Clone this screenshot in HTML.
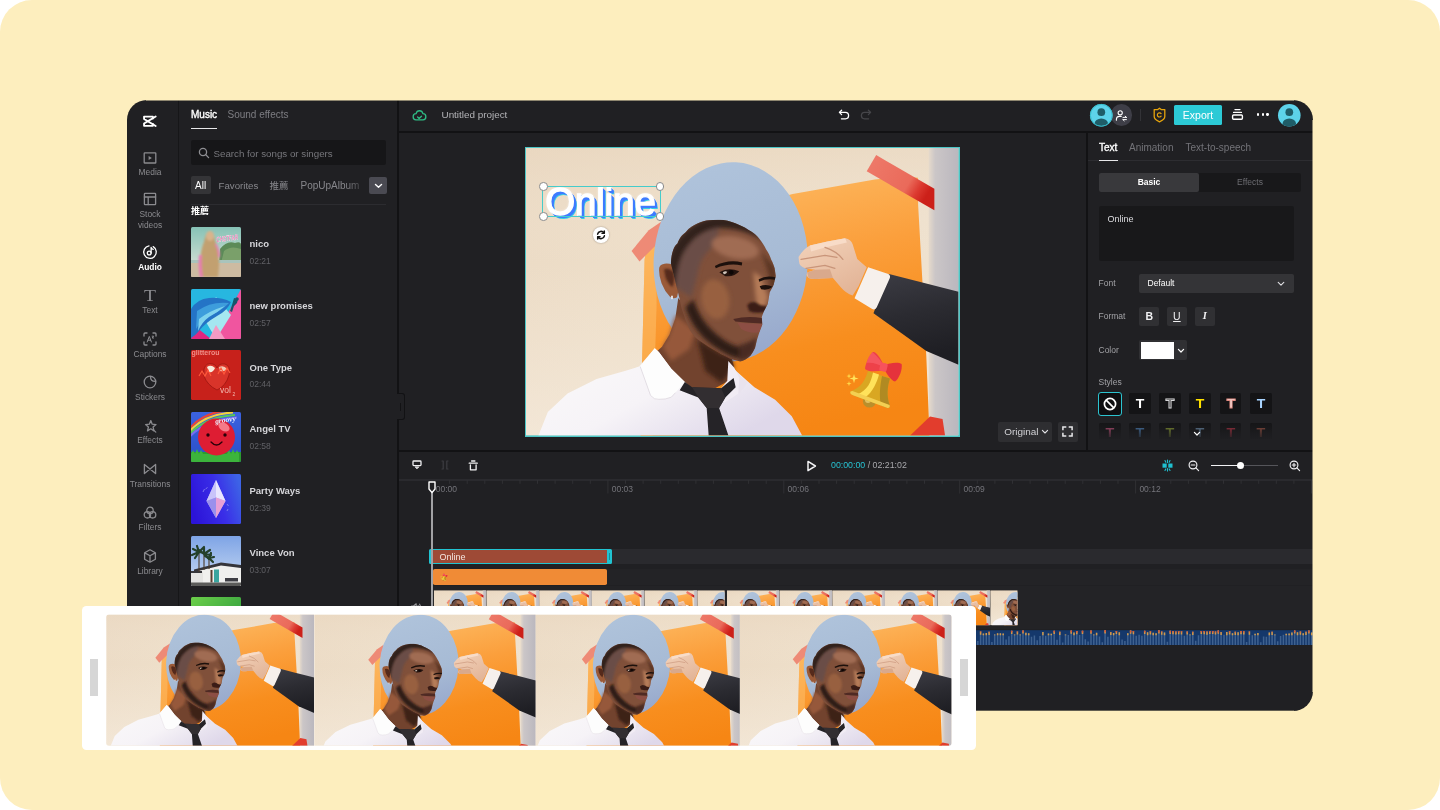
<!DOCTYPE html>
<html lang="en"><head><meta charset="utf-8"><title>Online video editor</title>
<style>

*{box-sizing:border-box;margin:0;padding:0}
html,body{width:1440px;height:810px;overflow:hidden;background:#fff}
body{font-family:"Liberation Sans","Noto Sans CJK TC",sans-serif;font-size:10px;color:#c8c8cc}
#stage{position:absolute;left:0;top:0;width:1440px;height:810px;background:#FDEEBE;border-radius:32px;overflow:hidden}
#win{will-change:transform;position:absolute;left:0;top:0;width:1440px;height:810px;clip-path:inset(100px 127px 99px 127px round 20px)}
#win>.bg{position:absolute;left:127px;top:100px;width:1186px;height:611px;background:#202023}
.a{position:absolute}
.t{position:absolute;white-space:nowrap;line-height:1}
.c{transform:translateX(-50%)}
svg{display:block;overflow:visible}
svg svg{overflow:hidden}
.ln{position:absolute;background:#121214}

</style></head>
<body>
<svg width="0" height="0" style="position:absolute"><defs>
<linearGradient id="pwall" x1="0" y1="0" x2="1" y2="0.5"><stop offset="0" stop-color="#ebdac4"/><stop offset="0.45" stop-color="#eedfca"/><stop offset="1" stop-color="#efe2d0"/></linearGradient>
<linearGradient id="pwall2" x1="0" y1="0" x2="0" y2="1"><stop offset="0" stop-color="#e8d5bd" stop-opacity="0.5"/><stop offset="0.4" stop-color="#f4e8d8" stop-opacity="0"/><stop offset="1" stop-color="#f6ecdf" stop-opacity="0.6"/></linearGradient>
<linearGradient id="pgray" x1="0" y1="0" x2="1" y2="0"><stop offset="0" stop-color="#e6dacb"/><stop offset="0.22" stop-color="#cbc6c7"/><stop offset="1" stop-color="#bab7be"/></linearGradient>
<linearGradient id="porange" x1="0.2" y1="0" x2="0.45" y2="1"><stop offset="0" stop-color="#fdbb64"/><stop offset="0.38" stop-color="#fb9f3c"/><stop offset="0.7" stop-color="#f88e1e"/><stop offset="1" stop-color="#f68614"/></linearGradient>
<linearGradient id="poval" x1="0.3" y1="0" x2="0.6" y2="1"><stop offset="0" stop-color="#afc3db"/><stop offset="0.6" stop-color="#a7bbd5"/><stop offset="1" stop-color="#97a8cc"/></linearGradient>
<linearGradient id="pshirt" x1="0" y1="0" x2="1" y2="0.6"><stop offset="0" stop-color="#fbfafa"/><stop offset="0.55" stop-color="#f6f3f7"/><stop offset="1" stop-color="#dfd8ea"/></linearGradient>
<linearGradient id="psleeve" x1="0" y1="0" x2="0.2" y2="1"><stop offset="0" stop-color="#3c3c44"/><stop offset="0.5" stop-color="#2b2b31"/><stop offset="1" stop-color="#1e1e23"/></linearGradient>
<linearGradient id="phand" x1="0" y1="0" x2="0.6" y2="1"><stop offset="0" stop-color="#f3d3bb"/><stop offset="1" stop-color="#e3b598"/></linearGradient>
<linearGradient id="ptape" x1="0" y1="0" x2="1" y2="0.5"><stop offset="0" stop-color="#ee7b6b"/><stop offset="0.7" stop-color="#ea6a5a"/><stop offset="0.86" stop-color="#dc3a30"/><stop offset="1" stop-color="#cc2019"/></linearGradient>
<filter id="pb2" x="-20%" y="-20%" width="140%" height="140%"><feGaussianBlur stdDeviation="2.2"/></filter>
<filter id="pb1" x="-20%" y="-20%" width="140%" height="140%"><feGaussianBlur stdDeviation="1"/></filter>
<clipPath id="phead"><path d="M145.4 116 C146 104 149 98 152 96 C154 90 157 87 160.2 84.6 C164 80 168 78 172 76 C176 74 180 73 183.9 72.7 C189 72 194 72 198 72.5 C204 73.5 209 75 213.5 77.2 C218 79 222 81.5 226 84 C229 86 232 88.5 234.3 91.5 C237 95 239 98 241 102 C243 105 245 108.5 246.1 112.3 C247.5 115 248.8 118 249.5 121 L250.6 128.6 L248.5 137.4 L244.6 144.9 L242.6 156.7 L238.7 164.1 L236.6 170 L237.2 177.4 L234.3 184.9 L231.9 192.3 L229.8 201.1 C228.5 204 227 206.5 225.4 208.6 C222 212 218.5 214 215 214.5 C211.5 214 208 213 204.6 211.5 L195.7 207.1 L183.9 200.3 L172 192.3 C169 189.5 166.5 186.5 164.6 183.4 C162 178.5 160 173.5 158.7 168.6 C156.5 163 155 157.5 154.3 152.3 Z"/></clipPath>
<symbol id="photo" viewBox="0 0 434 289" preserveAspectRatio="none">
<rect width="434" height="289" fill="url(#pwall)"/>
<rect width="434" height="289" fill="url(#pwall2)"/>
<rect x="404" width="30" height="289" fill="url(#pgray)"/>
<path d="M119 112 L124 84 L267.6 46.3 L350 31.7 L380 29 L393.3 30 L393.5 57.3 L397.6 130.6 L401.7 209.4 L405 291 L115 291 L116.5 215 Z" fill="url(#porange)"/>
<path d="M119 112 L122 96 L131 96 L131 160 L127 291 L115 291 L116.5 215 Z" fill="#fdbf6a" opacity="0.55"/>
<path d="M351.4 7.1 L409.8 41 L409.8 62.7 L341.9 23.4 Z" fill="url(#ptape)"/>
<path d="M105.9 103.6 L123.1 82.6 L136 74 L138 88 L129.3 98.7 L113.9 114.1 Z" fill="#ee8a76"/>
<path d="M385.5 289 L405.4 269.8 L418 272.5 L420.5 289 Z" fill="#e23d2d"/>
<ellipse cx="205.4" cy="114.4" rx="77.3" ry="100.2" fill="url(#poval)" transform="rotate(3 205.4 114.4)"/>
<!-- sleeve / cuff / hand -->
<path d="M363.6 126.6 L390.8 133.4 L434 144.5 L434 218 L401.7 204 L348.7 166 Z" fill="url(#psleeve)"/>
<path d="M343.3 119.8 L363.6 126.6 Q366 128 365 131 L352 160 Q350 163.5 347 161.5 L329.7 151 Z" fill="#f6f0ec"/>
<path d="M273.5 109.5 Q278 102 284.9 98.1 L302.5 94 L320.2 90.7 Q326 91.5 327.8 96.7 L332.4 111.6 L341.9 119.8 L333.8 138.8 L327.8 148.3 Q321 146 316.1 140.2 L308 130.6 L295.7 131.2 Q288 132.5 283.5 130.6 Q280.5 128 282.2 125.2 L290.3 122.5 L280.8 121.1 Q274 119 274 114.4 Z" fill="url(#phand)"/>
<path d="M284.9 98.1 L302.5 94 L320.2 90.7 L322 95 L300 100 L286 104 Z" fill="#f8dcc8"/>
<path d="M282.2 125.2 L290.3 122.5 L305 122 L308 130.6 L295.7 131.2 Q288 132.5 283.5 130.6 Z" fill="#d9a98c"/>
<path d="M276 112 L300 108 L312 110 M281 121 L300 118 L310 121 M300 100 Q312 104 318 112" stroke="#c9957a" stroke-width="1.3" fill="none" stroke-linecap="round"/>
<!-- neck -->
<path d="M152.8 150.8 L149.8 171.5 L143.9 187.8 L136.5 199.7 L130 205.6 L140 222 L158.7 239.7 L185 244 L209.1 231 L208.5 219 L206 210 L195.7 207.1 Z" fill="#72432e"/>
<path d="M150 168 L144 188 L137 200 L146 214 L164 202 L170 184 Z" fill="#96593a" filter="url(#pb2)"/>
<path d="M172 192.3 L195.7 207.1 L206 210 L208.5 222 L196 236 L180 224 Z" fill="#3c2118" filter="url(#pb2)"/>
<!-- ear -->
<path d="M133.5 123 Q133 117 139 116.3 Q147 115.5 151.5 121 L154 138.9 L151.5 150 Q148 152.5 144.5 149.5 Q139 144 136 136 Q133.5 129 133.5 123 Z" fill="#9a5a38"/>
<path d="M138.5 122 Q144 120 148 125 Q150 132 147 140 Q142 136 140 130 Z" fill="#55291a" filter="url(#pb1)"/>
<rect x="145.6" y="148.5" width="1.8" height="3.4" fill="#e9e9ee"/>
<!-- head -->
<g clip-path="url(#phead)">
<rect x="130" y="60" width="130" height="165" fill="#80503a"/>
<g filter="url(#pb2)">
<path d="M140 122 C146 96 156 80 184 70 C205 66 226 76 240 94 C226 85 210 80 194 80.5 C178 82 166 92 158 106 C153 116 151 128 150 140 L146 144 Z" fill="#33221f"/>
<path d="M150 140 C151 128 153 116 158 106 C166 92 178 82 194 80.5 L190 98 C180 104 174 114 172 128 L166 150 Z" fill="#6a4e46"/>
<ellipse cx="210" cy="100" rx="24" ry="11" fill="#a06c52" transform="rotate(12 210 100)"/>
<ellipse cx="190" cy="152" rx="14" ry="20" fill="#98603f" transform="rotate(-10 190 152)"/>
<path d="M228 124 L236 130 L243 150 L240 160 L232 160 L230 146 Z" fill="#b57b58"/>
<path d="M160 160 C166 178 176 192 196 204 C206 210 214 213 222 210 L230 198 C216 204 204 198 192 188 C180 178 172 166 168 152 Z" fill="#2f1a13"/>
<path d="M214 198 Q224 196 232 190 L230 204 Q224 214 214 214 Z" fill="#4a2a20"/>
<path d="M236 104 L250 120 L252 140 L246 146 L244 128 Z" fill="#5a3424"/>
</g>
<path d="M189.5 118.5 Q203 111.5 217 115 L216.5 118 Q203 115.5 190.5 120.8 Z" fill="#1c100c"/>
<path d="M194 125 Q203 119.5 214 124 Q209 130 200 128.8 Z" fill="#24130e"/>
<path d="M197.5 125 Q200 123.3 202 124.5 Q201 127 198.5 126.8 Z" fill="#cfc4ba"/>
<circle cx="206" cy="125" r="2.3" fill="#0e0706"/>
<path d="M233.5 132 Q241 127.5 250.6 130 L250 132.5 Q241 131 234 134.5 Z" fill="#1c100c"/>
<path d="M234.5 139 Q241 136 247.6 139.5 Q243 143.5 236 142 Z" fill="#1f110d"/>
<path d="M222 158 Q226 153 232 156 Q236 160 241 158.5 Q243 161 240.5 164.5 Q232 167 224 164 Z" fill="#3a1e15" filter="url(#pb1)"/>
<path d="M208 172 Q222 168.5 236.6 171 L237 176.5 Q224 176 210 174.5 Z" fill="#4f2a24"/>
<path d="M212 175.5 Q224 177 237 177 L234.3 184.9 Q226 187.5 216 182 Z" fill="#8c4e44"/>
</g>
<!-- shirt -->
<path d="M12.5 289 L21.9 265.5 L41.7 246.8 L70.8 232.2 L100 223.8 L113.5 219.7 L129.2 201.3 L133.3 205.1 L145.8 221.8 L159.4 235.3 L172 247 L196 247 L208.3 231.1 L208.3 221.8 L229.2 240.5 L250 253 L266.7 269.7 L277.1 289 Z" fill="url(#pshirt)"/>
<path d="M129.2 201.3 L114.6 219.7 L125 248.8 Q129 253.5 133.3 252.6 Q140 253 145.8 250.5 L159.4 235.3 L145.8 221.8 L133.3 205.1 Z" fill="#fdfdfd"/>
<path d="M114.6 219.7 L125 248.8 Q129 253.5 133.3 252.6 Q140 253 145.8 250.5 L150 246" stroke="#ddd6de" stroke-width="0.8" fill="none"/>
<path d="M208.3 221.8 L211 240 L203 252 L215 246 L222 236 Z" fill="#e9e3ee"/>
<path d="M203 214 L209 221 L214 231 L213 247 L199 256 L192 246 L202 234 Z" fill="#f1ecf4"/>
<!-- tie -->
<path d="M159.4 235.3 L166.7 240.5 L195.8 241.5 L208.3 231.1 L210.4 240.5 L200 250.9 L193.8 261.3 L203.1 289 L183.3 289 L181.3 261.3 L172.9 250.9 L154.2 243.6 Z" fill="#252327"/>
<path d="M166.7 240.5 L195.8 241.5 L200 250.9 L193.8 261.3 L181.3 261.3 L172.9 250.9 Z" fill="#322e31"/>
</symbol>
</defs></svg>
<div id="stage">
<div id="win">
<div class="bg"></div>
<div class="ln" style="left:178px;top:100px;width:1px;height:611px;background:#161618"></div>
<div class="ln" style="left:397px;top:100px;width:2px;height:611px"></div>
<div class="ln" style="left:398px;top:131px;width:915px;height:2px"></div>
<div class="ln" style="left:398px;top:450px;width:915px;height:2px"></div>
<div class="ln" style="left:1086px;top:132px;width:2px;height:319px"></div>
<svg class="a" style="left:142.3px;top:115.2px" width="15" height="12.4" viewBox="0 0 16 14" preserveAspectRatio="none" fill="none" stroke="#fff" stroke-width="2" stroke-linejoin="round" stroke-linecap="round"><path d="M14.6 1.6 L2.2 9.6 V12.2 H11.6 V10"/><path d="M14.6 12.4 L2.2 4.4 V1.8 H11.6 V4"/></svg>
<svg class="a" style="left:140px;top:147.5px" width="20" height="20" viewBox="0 0 20 20" fill="none" stroke="#8b8b8f" stroke-width="1.3" stroke-linecap="round" stroke-linejoin="round"><rect x="4.2" y="4.8" width="11.6" height="10.2" rx="0.6"/><path d="M8.6 7.9 L11.9 9.9 L8.6 11.9 Z" fill="#8b8b8f" stroke="none"/></svg>
<div class="t c" style="left:150px;top:168.0px;font-size:8.4px;color:#8b8b8f;font-weight:normal">Media</div>
<svg class="a" style="left:140px;top:189px" width="20" height="20" viewBox="0 0 20 20" fill="none" stroke="#8b8b8f" stroke-width="1.3" stroke-linecap="round" stroke-linejoin="round"><rect x="4.4" y="4.4" width="11.2" height="11.2" rx="0.6"/><path d="M4.4 8 H15.6 M8.2 8 V15.6"/></svg>
<div class="t c" style="left:150px;top:209.5px;font-size:8.4px;color:#8b8b8f;font-weight:normal">Stock</div>
<div class="t c" style="left:150px;top:220.8px;font-size:8.4px;color:#8b8b8f">videos</div>
<svg class="a" style="left:140px;top:242px" width="20" height="20" viewBox="0 0 20 20" fill="none" stroke="#ffffff" stroke-width="1.3" stroke-linecap="round" stroke-linejoin="round"><path d="M13.2 4.6 A6.3 6.3 0 1 1 9 3.8"/><circle cx="9.2" cy="11" r="1.9"/><path d="M11.1 11 V5.4 C11.4 6.6 12.2 7.2 13.2 7.4"/></svg>
<div class="t c" style="left:150px;top:262.5px;font-size:8.4px;color:#ffffff;font-weight:bold">Audio</div>
<div class="t c" style="left:150px;top:286.5px;font-family:'Liberation Serif',serif;font-size:17.5px;color:#8b8b8f;transform:translateX(-50%) scaleX(1.12)">T</div>
<div class="t c" style="left:150px;top:305.8px;font-size:8.4px;color:#8b8b8f">Text</div>
<svg class="a" style="left:140px;top:329px" width="20" height="20" viewBox="0 0 20 20" fill="none" stroke="#8b8b8f" stroke-width="1.3" stroke-linecap="round" stroke-linejoin="round"><path d="M4 7 V5 Q4 4 5 4 H7 M13 4 H15 Q16 4 16 5 V7 M16 13 V15 Q16 16 15 16 H13 M7 16 H5 Q4 16 4 15 V13"/><path d="M7.2 13 L9.3 7.4 L11.4 13 M8 11.2 H10.6 M12.2 7.2 H13.6 L12.2 9 H13.6" stroke-width="1"/></svg>
<div class="t c" style="left:150px;top:349.5px;font-size:8.4px;color:#8b8b8f;font-weight:normal">Captions</div>
<svg class="a" style="left:140px;top:372px" width="20" height="20" viewBox="0 0 20 20" fill="none" stroke="#8b8b8f" stroke-width="1.3" stroke-linecap="round" stroke-linejoin="round"><circle cx="10" cy="10" r="5.8"/><path d="M10.6 4.4 Q10.2 9.6 15.6 9.4"/></svg>
<div class="t c" style="left:150px;top:392.5px;font-size:8.4px;color:#8b8b8f;font-weight:normal">Stickers</div>
<svg class="a" style="left:140px;top:415.5px" width="20" height="20" viewBox="0 0 20 20" fill="none" stroke="#8b8b8f" stroke-width="1.3" stroke-linecap="round" stroke-linejoin="round"><path d="M10.8 4.6 L12.2 8.2 L16 8.6 L13.1 11.1 L14 14.9 L10.8 12.8 L7.5 14.9 L8.4 11.1 L5.6 8.6 L9.3 8.2 Z"/><path d="M14.2 14.6 L15.8 16.2" stroke-width="1.2"/></svg>
<div class="t c" style="left:150px;top:436.0px;font-size:8.4px;color:#8b8b8f;font-weight:normal">Effects</div>
<svg class="a" style="left:140px;top:459px" width="20" height="20" viewBox="0 0 20 20" fill="none" stroke="#8b8b8f" stroke-width="1.3" stroke-linecap="round" stroke-linejoin="round"><path d="M4.4 5.4 L15.6 14.6 V5.4 L4.4 14.6 Z"/></svg>
<div class="t c" style="left:150px;top:479.5px;font-size:8.4px;color:#8b8b8f;font-weight:normal">Transitions</div>
<svg class="a" style="left:140px;top:502.5px" width="20" height="20" viewBox="0 0 20 20" fill="none" stroke="#8b8b8f" stroke-width="1.3" stroke-linecap="round" stroke-linejoin="round"><circle cx="10" cy="7.4" r="3.2"/><circle cx="7.4" cy="11.8" r="3.2"/><circle cx="12.6" cy="11.8" r="3.2"/></svg>
<div class="t c" style="left:150px;top:523.0px;font-size:8.4px;color:#8b8b8f;font-weight:normal">Filters</div>
<svg class="a" style="left:140px;top:546px" width="20" height="20" viewBox="0 0 20 20" fill="none" stroke="#8b8b8f" stroke-width="1.3" stroke-linecap="round" stroke-linejoin="round"><path d="M10 3.8 L15.4 6.8 V13.2 L10 16.2 L4.6 13.2 V6.8 Z M4.8 6.9 L10 9.8 L15.2 6.9 M10 9.8 V16"/></svg>
<div class="t c" style="left:150px;top:566.5px;font-size:8.4px;color:#8b8b8f;font-weight:normal">Library</div>
<div class="t" style="left:191px;top:110px;font-size:10px;color:#fff;-webkit-text-stroke:0.35px #fff">Music</div>
<div class="t" style="left:227.5px;top:110px;font-size:10px;color:#7d7d82">Sound effects</div>
<div class="a" style="left:191px;top:128px;width:26px;height:1px;background:#e8e8ea"></div>
<div class="a" style="left:191px;top:140px;width:195px;height:25px;background:#161618;border-radius:2px"></div>
<svg class="a" style="left:198px;top:146.5px" width="12" height="12" viewBox="0 0 12 12" fill="none" stroke="#8e8e92" stroke-width="1.3" stroke-linecap="round"><circle cx="5" cy="5" r="3.6"/><path d="M7.8 7.8 L10.6 10.6"/></svg>
<div class="t" style="left:213.5px;top:148.9px;font-size:9.75px;color:#77777c">Search for songs or singers</div>
<div class="a" style="left:191px;top:176.2px;width:20.3px;height:17.4px;background:#343437;border-radius:2px"></div>
<div class="t" style="left:195px;top:180.5px;font-size:10px;color:#fff">All</div>
<div class="t" style="left:218.5px;top:180.5px;font-size:9.7px;color:#87878c">Favorites</div>
<div class="t" style="left:269.5px;top:180.5px;font-size:9.5px;color:#87878c">推薦</div>
<div class="t" style="left:300.5px;top:180.5px;font-size:10px;color:#87878c">PopUpAlbum</div>
<div class="a" style="left:345px;top:176px;width:24px;height:19px;background:linear-gradient(90deg,rgba(32,32,35,0),#202023)"></div>
<div class="a" style="left:369px;top:176.5px;width:17.5px;height:17.5px;background:#4a4a52;border-radius:2px"></div>
<svg class="a" style="left:373.5px;top:182.5px" width="9" height="6" viewBox="0 0 9 6" fill="none" stroke="#fff" stroke-width="1.4" stroke-linecap="round" stroke-linejoin="round"><path d="M1.5 1.5 L4.5 4.3 L7.5 1.5"/></svg>
<div class="a" style="left:191px;top:204px;width:195px;height:1px;background:#2c2c30"></div>
<div class="t" style="left:191px;top:206.5px;font-size:9px;color:#fff;font-weight:bold">推薦</div>
<svg width="0" height="0" style="position:absolute"><defs><linearGradient id="gpw" x1="0" y1="0.6" x2="1" y2="0.3"><stop offset="0" stop-color="#2c14d8"/><stop offset="0.55" stop-color="#3a2ee8"/><stop offset="1" stop-color="#3d63e6"/></linearGradient><linearGradient id="gni" x1="0" y1="0" x2="0" y2="1"><stop offset="0" stop-color="#86c2b6"/><stop offset="0.65" stop-color="#c5dace"/><stop offset="1" stop-color="#d5c9b0"/></linearGradient><linearGradient id="gan" x1="0" y1="0" x2="0" y2="1"><stop offset="0" stop-color="#3b62e0"/><stop offset="1" stop-color="#2a4fc8"/></linearGradient><filter id="cvb"><feGaussianBlur stdDeviation="0.9"/></filter><linearGradient id="gvv" x1="0" y1="0" x2="0" y2="1"><stop offset="0" stop-color="#7ea4e6"/><stop offset="0.7" stop-color="#b4cbef"/><stop offset="1" stop-color="#c8d8f2"/></linearGradient><linearGradient id="ggr" x1="0" y1="0" x2="1" y2="1"><stop offset="0" stop-color="#6ccf4a"/><stop offset="1" stop-color="#1f8f3a"/></linearGradient></defs></svg>
<svg class="a" style="left:191px;top:227.0px" width="50" height="50" viewBox="0 0 50 50"><g clip-path="url(#cv)"><rect width="50" height="50" fill="url(#gni)"/><path d="M29 22 Q36 13 44 16 Q50 14 50 18 V36 H28 Z" fill="#5c8a58"/><path d="M33 24 Q40 18 50 22 V36 H30 Z" fill="#7aa06a"/><rect y="35" width="50" height="15" fill="#cdbba2"/><rect y="33" width="50" height="3" fill="#a9c4bc"/><g filter="url(#cvb)"><path d="M9 50 Q8 26 13 15 Q15 4 19 4 Q23 4 24 14 Q30 26 27 50 Z" fill="#c2a070"/><path d="M8 28 Q7 40 9 50 H12 Q10 38 11 28 Z M25 16 Q29 22 29 30 L27 30 Q27 22 24 18 Z" fill="#e87ab0"/><ellipse cx="19" cy="9" rx="4" ry="5" fill="#d8b48c"/></g><text x="25.5" y="14" font-size="7.5" font-weight="bold" font-style="italic" fill="#f25aa8" stroke="#fff" stroke-width="0.25" font-family="Liberation Sans,sans-serif" transform="rotate(-7 36 12)" textLength="21.5" lengthAdjust="spacingAndGlyphs">CHSTFAR</text></g></svg>
<div class="t" style="left:249.5px;top:239.2px;font-size:9.5px;color:#d6d6da;font-weight:bold">nico</div>
<div class="t" style="left:249.5px;top:257.0px;font-size:8.5px;color:#606065">02:21</div>
<svg class="a" style="left:191px;top:288.7px" width="50" height="50" viewBox="0 0 50 50"><g clip-path="url(#cv)"><rect width="50" height="50" fill="#27b7e0"/><path d="M50 0 V50 H22 L38 22 Z" fill="#f0559f"/><path d="M0 50 V34 L20 50 Z" fill="#e0267f"/><path d="M25 8 L40 26 L25 50 L12 28 Z" fill="#a5e7f1"/><path d="M18 50 L25 36 L34 50 Z" fill="#f59ac4"/><path d="M0 20 Q6 10 18 9 Q30 8 40 13 Q36 22 26 27 Q14 34 8 42 Q4 47 0 49 Z" fill="#2474c6"/><path d="M6 22 Q20 12 38 14 Q30 22 20 26 Q10 31 5 40 Z" fill="#3d9ddc"/><path d="M8 30 Q18 22 34 17 Q26 24 18 28 Q11 33 7 42 Z" fill="#7fd3ee"/><path d="M43 9 l4 1 l-1 4 l-3 3 l-2 6 l-2 -1 l2 -6 z" fill="#15566b"/><circle cx="46" cy="10" r="1.8" fill="#15566b"/></g></svg>
<div class="t" style="left:249.5px;top:300.9px;font-size:9.5px;color:#d6d6da;font-weight:bold">new promises</div>
<div class="t" style="left:249.5px;top:318.7px;font-size:8.5px;color:#606065">02:57</div>
<svg class="a" style="left:191px;top:350.4px" width="50" height="50" viewBox="0 0 50 50"><g clip-path="url(#cv)"><rect width="50" height="50" fill="#c7211b"/><path d="M13 19 Q15 12 22 14 Q25 15 26 18 Q28 13 34 14 Q40 16 38 25 Q35 36 26 40 Q16 35 13 26 Z" fill="#d9342a" stroke="#9c1510" stroke-width="0.8"/><path d="M16 17 Q20 14 24 18 Q22 23 18 22 Z" fill="#f7ebdc"/><path d="M28 17 Q33 15 36 19 Q33 22 29 21 Z" fill="#f4c8b4"/><path d="M8 26 l3 -5 l3 5 l3 -6 l3 6 M27 24 l3 -6 l3 6 l3 -6 l3 5" stroke="#ff5a3c" stroke-width="1.1" fill="none"/><text x="29" y="43" font-size="8.5" fill="#f3b9b0" font-family="Liberation Sans,sans-serif">vol</text><text x="41.5" y="46" font-size="5" fill="#f3b9b0" font-family="Liberation Sans,sans-serif">2</text><text x="0.5" y="4.5" font-size="7" font-weight="bold" fill="#ef8f88" font-family="Liberation Sans,sans-serif">glitterou</text></g></svg>
<div class="t" style="left:249.5px;top:362.6px;font-size:9.5px;color:#d6d6da;font-weight:bold">One Type</div>
<div class="t" style="left:249.5px;top:380.4px;font-size:8.5px;color:#606065">02:44</div>
<svg class="a" style="left:191px;top:412.1px" width="50" height="50" viewBox="0 0 50 50"><g clip-path="url(#cv)"><rect width="50" height="50" fill="url(#gan)"/><path d="M-4 20 Q10 0 40 -2" stroke="#e8453a" stroke-width="2.2" fill="none"/><path d="M-4 22.5 Q11 2.5 42 0.5" stroke="#f4d23a" stroke-width="2.2" fill="none"/><path d="M-4 25 Q12 5 44 3" stroke="#58c85a" stroke-width="2.2" fill="none"/><path d="M-4 27.5 Q13 7.5 46 5.5" stroke="#7a6cf0" stroke-width="2.2" fill="none"/><rect y="40" width="50" height="10" fill="#2c9a30"/><path d="M0 42 l2 -4 l2 4 l2 -5 l2 5 l2 -4 l2 4 l24 0 l2 -4 l2 4 l2 -5 l2 5 l2 -4 l2 4 V50 H0 Z" fill="#3cb43c"/><circle cx="25.5" cy="25" r="18.5" fill="#de1d33"/><ellipse cx="33" cy="15" rx="6" ry="4" fill="#f57a88" transform="rotate(30 33 15)"/><circle cx="17" cy="23" r="1.7" fill="#2a0008"/><circle cx="34" cy="23" r="1.7" fill="#2a0008"/><path d="M20 30 Q25.5 36 31 30" stroke="#2a0008" stroke-width="1.3" fill="none" stroke-linecap="round"/><text x="24" y="10" font-size="7.5" font-weight="bold" font-style="italic" fill="#eef0ff" font-family="Liberation Serif,serif" transform="rotate(-8 36 8)">groovy</text></g></svg>
<div class="t" style="left:249.5px;top:424.3px;font-size:9.5px;color:#d6d6da;font-weight:bold">Angel TV</div>
<div class="t" style="left:249.5px;top:442.1px;font-size:8.5px;color:#606065">02:58</div>
<svg class="a" style="left:191px;top:473.8px" width="50" height="50" viewBox="0 0 50 50"><g clip-path="url(#cv)"><rect width="50" height="50" fill="url(#gpw)"/><path d="M25 6 L34.5 27 L25 44 L15.5 27 Z" fill="#b6b0f4"/><path d="M25 6 L34.5 27 L25 23.5 Z" fill="#e9e6ff"/><path d="M25 6 L15.5 27 L25 23.5 Z" fill="#c9c4fa"/><path d="M25 23.5 L34.5 27 L25 44 Z" fill="#e8a0d6"/><path d="M25 23.5 L15.5 27 L25 44 Z" fill="#9a90ec"/><path d="M12 18 l1.5 -3 M14.5 15 l2 -1.5 M36 30 l1.5 2 M37 35 l-1 2" stroke="#8f8cf0" stroke-width="0.8"/></g></svg>
<div class="t" style="left:249.5px;top:486.0px;font-size:9.5px;color:#d6d6da;font-weight:bold">Party Ways</div>
<div class="t" style="left:249.5px;top:503.8px;font-size:8.5px;color:#606065">02:39</div>
<svg class="a" style="left:191px;top:535.5px" width="50" height="50" viewBox="0 0 50 50"><g clip-path="url(#cv)"><rect width="50" height="50" fill="url(#gvv)"/><path d="M4 34 L30 29 L50 31.5 V50 H4 Z" fill="#f0f0ee"/><path d="M0 36 H12 V47 H0 Z" fill="#e4e4e2"/><path d="M3 33.5 L30 26.5 L50 29 V32 L30 29.5 L3 36 Z" fill="#35353a"/><path d="M0 35 H11 V37 H0 Z" fill="#35353a"/><rect x="23" y="33.5" width="5" height="13" fill="#3aa59f"/><rect x="19.5" y="34" width="2" height="12.5" fill="#5a3f30"/><rect x="34" y="42" width="13" height="3.5" fill="#3e3e44"/><rect x="0" y="46.5" width="50" height="3.5" fill="#5c5c5a"/><path d="M8 36 V16 M13 34 V18 M18 33 V22" stroke="#4a3a2a" stroke-width="1.1"/><g stroke="#24402a" stroke-width="2.2" stroke-linecap="round"><path d="M8 16 l-7 3 M8 16 l-6 -3 M8 16 l-2 -6 M8 16 l5 -5 M8 16 l6 1 M8 16 l-4 6"/><path d="M13 18 l-5 -4 M13 18 l0 -6 M13 18 l6 -4 M13 18 l7 1 M13 18 l5 5"/><path d="M18 22 l-4 -2 M18 22 l2 -5 M18 22 l5 -1 M18 22 l4 4"/></g></g></svg>
<div class="t" style="left:249.5px;top:547.7px;font-size:9.5px;color:#d6d6da;font-weight:bold">Vince Von</div>
<div class="t" style="left:249.5px;top:565.5px;font-size:8.5px;color:#606065">03:07</div>
<svg class="a" style="left:191px;top:597.2px" width="50" height="50" viewBox="0 0 50 50"><g clip-path="url(#cv)"><rect width="50" height="50" fill="url(#ggr)"/></g></svg>
<svg width="0" height="0" style="position:absolute"><defs><clipPath id="cv"><rect width="50" height="50" rx="1.5"/></clipPath></defs></svg>
<svg class="a" style="left:412px;top:107.3px" width="15" height="15" viewBox="0 0 15 14" preserveAspectRatio="none" fill="none" stroke="#2fbd85" stroke-width="1.3" stroke-linecap="round" stroke-linejoin="round"><path d="M4.1 6.2 A3.5 3.5 0 0 1 10.9 6.2 A2.9 2.9 0 0 1 11 12 H4 A2.9 2.9 0 0 1 4.1 6.2 Z"/><path d="M5.6 9.3 L7.1 10.6 L9.5 8.6"/></svg>
<div class="t" style="left:441.5px;top:109.8px;font-size:9.9px;color:#b4b4b8">Untitled project</div>
<svg class="a" style="left:838px;top:108.5px" width="12" height="12" viewBox="0 0 12 12" fill="none" stroke="#fff" stroke-width="1.3" stroke-linecap="round" stroke-linejoin="round"><path d="M3.6 1.2 L1.4 3.4 L3.6 5.6"/><path d="M1.6 3.4 H7.4 A3.1 3.1 0 0 1 7.4 9.8 H3.4"/></svg>
<svg class="a" style="left:860px;top:108.5px" width="12" height="12" viewBox="0 0 12 12" fill="none" stroke="#46464a" stroke-width="1.3" stroke-linecap="round" stroke-linejoin="round"><path d="M8.4 1.2 L10.6 3.4 L8.4 5.6"/><path d="M10.4 3.4 H4.6 A3.1 3.1 0 0 0 4.6 9.8 H8.6"/></svg>
<div class="a" style="left:1110.5px;top:104.4px;width:21.5px;height:21.5px;border-radius:50%;background:#3e3e47"></div>
<svg class="a" style="left:1115px;top:108.5px" width="13" height="13" viewBox="0 0 13 13" fill="none" stroke="#fff" stroke-width="1.1" stroke-linecap="round" stroke-linejoin="round"><circle cx="5.2" cy="3.8" r="2.1"/><path d="M1.4 11.2 V10 A3 3 0 0 1 4.4 7.4 H6.2"/><path d="M8 8.4 H11.4 M10.2 7.2 L11.5 8.4 M11.4 10.6 H8 M9.2 11.8 L7.9 10.6" stroke-width="1"/></svg>
<svg class="a" style="left:1089.3px;top:102.9px" width="24.6" height="24.6" viewBox="-12.3 -12.3 24.6 24.6"><clipPath id="av1101"><circle r="11.3"/></clipPath><circle r="11.3" fill="#5dd3ea"/><g clip-path="url(#av1101)" fill="#1f5d68"><circle cx="0" cy="-3.16" r="3.84"/><ellipse cx="0" cy="8.81" rx="6.78" ry="5.65"/></g><circle r="10.9" fill="none" stroke="#35bccb" stroke-width="1"/></svg>
<div class="a" style="left:1139.5px;top:109px;width:1px;height:12px;background:#333337"></div>
<svg class="a" style="left:1151.5px;top:106.5px" width="15" height="16" viewBox="0 0 15 16" fill="none" stroke="#e6a40c" stroke-width="1.3" stroke-linejoin="round" stroke-linecap="round"><path d="M7.5 1.2 L9.2 2.6 H12.8 V9.6 Q12.8 12.6 7.5 14.8 Q2.2 12.6 2.2 9.6 V2.6 H5.8 Z"/><path d="M9.1 6.6 A2.1 2.1 0 1 0 9.1 9.2" stroke-width="1.2"/></svg>
<div class="a" style="left:1174px;top:105px;width:48px;height:19.7px;background:#2ccad6;border-radius:1.5px"></div>
<div class="t c" style="left:1198px;top:109.8px;font-size:10.5px;color:#fff">Export</div>
<svg class="a" style="left:1231px;top:108px" width="13" height="13" viewBox="0 0 13 13" fill="none" stroke="#fff" stroke-width="1.4" stroke-linecap="round" stroke-linejoin="round"><path d="M4 1.6 H9 M2.6 4.4 H10.4"/><rect x="1.6" y="7" width="9.8" height="4.2" rx="1"/></svg>
<div class="a" style="left:1257.1px;top:113.4px;width:2.3px;height:2.3px;border-radius:50%;background:#fff"></div>
<div class="a" style="left:1261.7px;top:113.4px;width:2.3px;height:2.3px;border-radius:50%;background:#fff"></div>
<div class="a" style="left:1266.3px;top:113.4px;width:2.3px;height:2.3px;border-radius:50%;background:#fff"></div>
<svg class="a" style="left:1277.1000000000001px;top:102.9px" width="24.6" height="24.6" viewBox="-12.3 -12.3 24.6 24.6"><clipPath id="av1289"><circle r="11.3"/></clipPath><circle r="11.3" fill="#5dd3ea"/><g clip-path="url(#av1289)" fill="#1f5d68"><circle cx="0" cy="-3.16" r="3.84"/><ellipse cx="0" cy="8.81" rx="6.78" ry="5.65"/></g></svg>
<div class="a" style="left:525px;top:147px;width:434.5px;height:289.5px;background:#4cc6c6"></div>
<svg class="a" style="left:526px;top:148px" width="432.5" height="287.5" viewBox="0 0 434 289" preserveAspectRatio="none"><use href="#photo" width="434" height="289"/></svg>
<svg class="a" style="left:830px;top:340px" width="90" height="80" viewBox="0 0 90 80"><g>
<path d="M24 34 l1 3.6 l3.6 1 l-3.6 1 l-1 3.6 l-1 -3.6 l-3.6 -1 l3.6 -1 z" fill="#ffe45c"/>
<path d="M19 33.5 l.6 2 l2 .6 l-2 .6 l-.6 2 l-.6 -2 l-2 -.6 l2 -.6 z M19 41 l.6 2 l2 .6 l-2 .6 l-.6 2 l-.6 -2 l-2 -.6 l2 -.6 z" fill="#ffd94a"/>
<circle cx="39.5" cy="61" r="6.6" fill="#b98f2c"/>
<circle cx="38" cy="60" r="3" fill="#e2c062"/>
<path d="M38 31 C35 40 32.5 46.5 20.5 51.5 C19.8 53 20.8 54.6 23 55.2 L57.5 68 C59.4 68.3 60.2 67 59.6 65 C56.5 56 57.5 46 60 38.5 Z" fill="#d9a722"/>
<path d="M43 32.5 C41 42 38 50 27 54.5 L35 57.5 C43 52 47 42 49 34.5 Z" fill="#ffe25a"/>
<path d="M52 36 C50 46 49 56 51 65.5 L57.5 68 C59.4 68.3 60.2 67 59.6 65 C56.5 56 57.5 46 60 38.5 Z" fill="#b08a22"/>
<path d="M20.5 51.5 C19.8 53 20.8 54.6 23 55.2 L57.5 68 C59.4 68.3 60.2 67 59.6 65 L22.5 51 Z" fill="#f3cf52"/>
<path d="M53 24 C48.5 14 44.5 11 42.5 12.3 C38 17 35.2 25 35 29 C38 32 46 31.5 53 30.5 Z" fill="#ee4149"/>
<path d="M56 24.5 C62 22.5 69 22 71.6 24 C72.6 30 69 38.5 65 41.6 C61 40 57 34.5 55 30.5 Z" fill="#e5333c"/>
<path d="M42.5 12.3 C46 15 50 20 53 24 L53 27 C48 24 42 22 36.5 23 C38 18 40 14.5 42.5 12.3 Z" fill="#f8606a" opacity="0.7"/>
<rect x="49.8" y="23" width="7.4" height="8.4" rx="1.8" fill="#f7525b" transform="rotate(14 53.5 27.2)"/>
</g></svg>
<div class="t" style="left:545.3px;top:182.5px;font-size:38.5px;color:#fff;letter-spacing:-0.15px;text-shadow:0.5px 0.5px 0 #3f7cff,1.0px 1.0px 0 #3f7cff,1.5px 1.5px 0 #3f7cff,2.0px 2.0px 0 #3f7cff,2.5px 2.5px 0 #3f7cff,3.0px 3.0px 0 #3f7cff,3.5px 4px 0 #35d0e6,0 0 3px #fff;-webkit-text-stroke:1.3px #fff">Online</div>
<div class="a" style="left:542.3px;top:185.6px;width:118.6px;height:31.8px;border:1.6px solid #45cccb"></div>
<div class="a" style="left:539.2px;top:182.0px;width:8.6px;height:8.6px;border-radius:50%;background:#fff;border:0.8px solid #8a8a8a"></div>
<div class="a" style="left:655.7px;top:182.0px;width:8.6px;height:8.6px;border-radius:50%;background:#fff;border:0.8px solid #8a8a8a"></div>
<div class="a" style="left:539.2px;top:212.39999999999998px;width:8.6px;height:8.6px;border-radius:50%;background:#fff;border:0.8px solid #8a8a8a"></div>
<div class="a" style="left:655.7px;top:212.39999999999998px;width:8.6px;height:8.6px;border-radius:50%;background:#fff;border:0.8px solid #8a8a8a"></div>
<div class="a" style="left:593.3px;top:227.3px;width:15.4px;height:15.4px;border-radius:50%;background:#fff;box-shadow:0 0 2px rgba(0,0,0,.35)"></div>
<svg class="a" style="left:596px;top:230px" width="10" height="10" viewBox="0 0 10 10" fill="none" stroke="#111" stroke-width="1.5" stroke-linecap="round" stroke-linejoin="round"><path d="M1.6 4.2 A3.5 3.5 0 0 1 8 3"/><path d="M8.3 0.9 V3.2 H6"/><path d="M8.4 5.8 A3.5 3.5 0 0 1 2 7"/><path d="M1.7 9.1 V6.8 H4"/></svg>
<div class="a" style="left:998.2px;top:422px;width:53.6px;height:19.7px;background:#2e2e31;border-radius:2px"></div>
<div class="t" style="left:1004.2px;top:427.2px;font-size:9.95px;color:#d2d2d6">Original</div>
<svg class="a" style="left:1040.5px;top:429.2px" width="8" height="6" viewBox="0 0 8 6" fill="none" stroke="#e4e4e8" stroke-width="1.1" stroke-linecap="round" stroke-linejoin="round"><path d="M1.4 1.4 L4 4 L6.6 1.4"/></svg>
<div class="a" style="left:1057.9px;top:422px;width:20px;height:19.7px;background:#2e2e31;border-radius:2px"></div>
<svg class="a" style="left:1062.3px;top:426.4px" width="11" height="11" viewBox="0 0 11 11" fill="none" stroke="#e8e8ea" stroke-width="1.5" stroke-linejoin="miter"><path d="M0.9 4.3 V0.9 H4.3 M6.7 0.9 H10.1 V4.3 M10.1 6.7 V10.1 H6.7 M4.3 10.1 H0.9 V6.7"/></svg>
<div class="a" style="left:397px;top:393.3px;width:7.8px;height:27.2px;background:#202023;border:1.4px solid #121214;border-left:none;border-radius:0 3px 3px 0"></div>
<div class="a" style="left:399.6px;top:403px;width:1.2px;height:8px;background:#121214"></div>
<div class="t" style="left:1099px;top:142.5px;font-size:10px;color:#fff;-webkit-text-stroke:0.35px #fff">Text</div>
<div class="t" style="left:1129px;top:142.5px;font-size:10px;color:#737378">Animation</div>
<div class="t" style="left:1185.5px;top:142.5px;font-size:10px;color:#737378">Text-to-speech</div>
<div class="a" style="left:1088px;top:160px;width:225px;height:1px;background:#2d2d31"></div>
<div class="a" style="left:1099px;top:159.5px;width:18.5px;height:1.5px;background:#e8e8ea"></div>
<div class="a" style="left:1099px;top:172.5px;width:201.5px;height:19px;background:#18181a;border-radius:2px"></div>
<div class="a" style="left:1099px;top:172.5px;width:100px;height:19px;background:#39393c;border-radius:2px"></div>
<div class="t c" style="left:1149px;top:177.8px;font-size:8.5px;color:#fff;font-weight:bold">Basic</div>
<div class="t c" style="left:1250px;top:177.8px;font-size:8.5px;color:#6d6d72">Effects</div>
<div class="a" style="left:1099px;top:205.5px;width:194.5px;height:55px;background:#18181a;border-radius:2px"></div>
<div class="t" style="left:1107.5px;top:214.5px;font-size:9px;color:#dcdce0">Online</div>
<div class="t" style="left:1098.5px;top:279.3px;font-size:8.5px;color:#a2a2a6">Font</div>
<div class="a" style="left:1139.3px;top:273.6px;width:154.3px;height:19.3px;background:#343437;border-radius:2px"></div>
<div class="t" style="left:1147.5px;top:279.3px;font-size:8.5px;color:#fff">Default</div>
<svg class="a" style="left:1277px;top:280.5px" width="8" height="6" viewBox="0 0 8 6" fill="none" stroke="#e0e0e4" stroke-width="1.1" stroke-linecap="round" stroke-linejoin="round"><path d="M1.2 1.4 L4 4.2 L6.8 1.4"/></svg>
<div class="t" style="left:1098.5px;top:312.3px;font-size:8.5px;color:#a2a2a6">Format</div>
<div class="a" style="left:1139.3px;top:307px;width:19.7px;height:19px;background:#303033;border-radius:2px"></div>
<div class="t c" style="left:1149.2px;top:311.3px;font-size:10.5px;color:#f0f0f2;font-weight:bold">B</div>
<div class="a" style="left:1167px;top:307px;width:19.7px;height:19px;background:#303033;border-radius:2px"></div>
<div class="t c" style="left:1176.9px;top:311.3px;font-size:10.5px;color:#f0f0f2;text-decoration:underline">U</div>
<div class="a" style="left:1195px;top:307px;width:19.7px;height:19px;background:#303033;border-radius:2px"></div>
<div class="t c" style="left:1204.9px;top:311.3px;font-size:10.5px;color:#f0f0f2;font-style:italic;font-family:'Liberation Serif',serif;font-weight:bold">I</div>
<div class="t" style="left:1098.5px;top:346.3px;font-size:8.5px;color:#a2a2a6">Color</div>
<div class="a" style="left:1139.3px;top:340.2px;width:47.7px;height:19.8px;background:#303033;border-radius:2px"></div>
<div class="a" style="left:1140.6px;top:342.2px;width:33.2px;height:16.6px;background:#fff"></div>
<svg class="a" style="left:1176.5px;top:347.5px" width="8" height="6" viewBox="0 0 8 6" fill="none" stroke="#fff" stroke-width="1.2" stroke-linecap="round" stroke-linejoin="round"><path d="M1.4 1.4 L4 4 L6.6 1.4"/></svg>
<div class="t" style="left:1098.5px;top:377.7px;font-size:8.5px;color:#a2a2a6">Styles</div>
<div class="a" style="left:1097.8px;top:391.6px;width:24.2px;height:24px;background:#0f0f11;border:1.4px solid #2cc4d0;border-radius:3px"></div>
<svg class="a" style="left:1102.9px;top:396.6px" width="14" height="14" viewBox="0 0 14 14" fill="none" stroke="#fff" stroke-width="1.7"><circle cx="7" cy="7" r="5.6"/><path d="M3.2 3.2 L10.8 10.8"/></svg>
<div class="a" style="left:1129px;top:392.8px;width:21.8px;height:21.6px;background:#141416;border-radius:1.5px"></div>
<div class="t c" style="left:1139.9px;top:397.6px;font-size:12.5px;font-weight:bold;color:#fff;transform:translateX(-50%) scaleX(1.12)">T</div>
<div class="a" style="left:1159.2px;top:392.8px;width:21.8px;height:21.6px;background:#141416;border-radius:1.5px"></div>
<div class="t c" style="left:1170.1000000000001px;top:397.6px;font-size:12.5px;font-weight:bold;color:#18181a;-webkit-text-stroke:0.9px #d8d8da;transform:translateX(-50%) scaleX(1.12)">T</div>
<div class="a" style="left:1189.2px;top:392.8px;width:21.8px;height:21.6px;background:#141416;border-radius:1.5px"></div>
<div class="t c" style="left:1200.1000000000001px;top:397.6px;font-size:12.5px;font-weight:bold;color:#ffe100;transform:translateX(-50%) scaleX(1.12)">T</div>
<div class="a" style="left:1219.6px;top:392.8px;width:21.8px;height:21.6px;background:#141416;border-radius:1.5px"></div>
<div class="t c" style="left:1230.5px;top:397.6px;font-size:12.5px;font-weight:bold;color:#fff;-webkit-text-stroke:0.9px #e08a80;transform:translateX(-50%) scaleX(1.12)">T</div>
<div class="a" style="left:1249.8px;top:392.8px;width:21.8px;height:21.6px;background:#141416;border-radius:1.5px"></div>
<div class="t c" style="left:1260.7px;top:397.6px;font-size:12.5px;font-weight:bold;color:#a9d4ff;transform:translateX(-50%) scaleX(1.12)">T</div>
<div class="a" style="left:1099px;top:422.5px;width:21.8px;height:16px;background:#141416;border-radius:1.5px 1.5px 0 0"></div>
<div class="t c" style="left:1109.9px;top:426.8px;font-size:12.5px;font-weight:bold;color:#c05078;transform:translateX(-50%) scaleX(1.15)">T</div>
<div class="a" style="left:1129px;top:422.5px;width:21.8px;height:16px;background:#141416;border-radius:1.5px 1.5px 0 0"></div>
<div class="t c" style="left:1139.9px;top:426.8px;font-size:12.5px;font-weight:bold;color:#4a80b8;transform:translateX(-50%) scaleX(1.15)">T</div>
<div class="a" style="left:1159.2px;top:422.5px;width:21.8px;height:16px;background:#141416;border-radius:1.5px 1.5px 0 0"></div>
<div class="t c" style="left:1170.1000000000001px;top:426.8px;font-size:12.5px;font-weight:bold;color:#8a9a30;transform:translateX(-50%) scaleX(1.15)">T</div>
<div class="a" style="left:1189.2px;top:422.5px;width:21.8px;height:16px;background:#141416;border-radius:1.5px 1.5px 0 0"></div>
<div class="t c" style="left:1200.1000000000001px;top:426.8px;font-size:12.5px;font-weight:bold;color:#6a8aa8;transform:translateX(-50%) scaleX(1.15)">T</div>
<div class="a" style="left:1219.6px;top:422.5px;width:21.8px;height:16px;background:#141416;border-radius:1.5px 1.5px 0 0"></div>
<div class="t c" style="left:1230.5px;top:426.8px;font-size:12.5px;font-weight:bold;color:#b03040;transform:translateX(-50%) scaleX(1.15)">T</div>
<div class="a" style="left:1249.8px;top:422.5px;width:21.8px;height:16px;background:#141416;border-radius:1.5px 1.5px 0 0"></div>
<div class="t c" style="left:1260.7px;top:426.8px;font-size:12.5px;font-weight:bold;color:#9a5040;transform:translateX(-50%) scaleX(1.15)">T</div>
<div class="a" style="left:1090px;top:420px;width:222px;height:30px;background:linear-gradient(180deg,rgba(32,32,35,0.1) 10%,rgba(32,32,35,0.75) 50%,#202023 72%)"></div>
<svg class="a" style="left:1192.5px;top:431px" width="8" height="6" viewBox="0 0 8 6" fill="none" stroke="#fff" stroke-width="1.2" stroke-linecap="round" stroke-linejoin="round"><path d="M1.4 1.4 L4 4 L6.6 1.4"/></svg>
<svg class="a" style="left:411.7px;top:460.2px" width="10" height="10" viewBox="0 0 10 10" fill="none" stroke="#f2f2f4" stroke-width="1.3" stroke-linejoin="round" stroke-linecap="round"><rect x="1" y="1" width="8" height="4.6" rx="0.8"/><path d="M3.4 7.2 L5 8.8 L6.6 7.2 Z" fill="#f2f2f4" stroke-width="0.8"/></svg>
<svg class="a" style="left:440px;top:460px" width="10" height="10" viewBox="0 0 10 10" fill="none" stroke="#3c3c41" stroke-width="1.2" stroke-linecap="round" stroke-linejoin="round"><path d="M2 1 H3.2 V9 H2 M8 1 H6.8 V9 H8"/></svg>
<svg class="a" style="left:467.7px;top:459.6px" width="10.5" height="11" viewBox="0 0 10.5 11" fill="none" stroke="#f2f2f4" stroke-width="1.3" stroke-linecap="round" stroke-linejoin="round"><path d="M3.6 1 H6.9 M1.2 3.2 H9.3 M2.4 5 V9.8 H8.1 V5"/></svg>
<svg class="a" style="left:806px;top:459.5px" width="11" height="12" viewBox="0 0 11 12" fill="none" stroke="#f2f2f4" stroke-width="1.5" stroke-linejoin="round"><path d="M2 1.4 L9.4 6 L2 10.6 Z"/></svg>
<div class="t" style="left:831px;top:461.2px;font-size:8.8px;color:#a9a9ad"><span style="color:#27c3d3">00:00:00</span> / 02:21:02</div>
<svg class="a" style="left:1161px;top:459px" width="13" height="13" viewBox="0 0 13 13" fill="none" stroke="#1fc0d0" stroke-width="1.1" stroke-linecap="round"><rect x="1.5" y="4.5" width="4.2" height="4.2" fill="#1fc0d0" stroke="none"/><rect x="7.3" y="4.5" width="4.2" height="4.2" fill="#1fc0d0" stroke="none"/><path d="M6.5 1 V3.6 M6.5 9.6 V12 M4 1.6 L4.8 3.2 M9 1.6 L8.2 3.2 M4 11.4 L4.8 9.9 M9 11.4 L8.2 9.9"/></svg>
<svg class="a" style="left:1187.9px;top:459.8px" width="12" height="12" viewBox="0 0 12 12" fill="none" stroke="#f2f2f4" stroke-width="1.150" stroke-linecap="round"><circle cx="5" cy="5" r="3.9"/><path d="M7.9 7.9 L10.6 10.6"/><path d="M3.2 5 H6.8"/></svg>
<svg class="a" style="left:1289.2px;top:459.8px" width="12" height="12" viewBox="0 0 12 12" fill="none" stroke="#f2f2f4" stroke-width="1.150" stroke-linecap="round"><circle cx="5" cy="5" r="3.9"/><path d="M7.9 7.9 L10.6 10.6"/><path d="M3.2 5 H6.8 M5 3.2 V6.8"/></svg>
<div class="a" style="left:1211px;top:464.8px;width:67px;height:1.2px;background:#55555a"></div>
<div class="a" style="left:1211px;top:464.7px;width:30px;height:1.4px;background:#f2f2f4"></div>
<div class="a" style="left:1237px;top:462px;width:7px;height:7px;border-radius:50%;background:#fff"></div>
<div class="a" style="left:399px;top:479px;width:914px;height:1.5px;background:#2a2a2e"></div>
<svg class="a" style="left:0;top:0" width="1440" height="810"><rect x="431.5" y="480" width="1" height="13.5" fill="#303034"/><rect x="449.1" y="480" width="1" height="3.8" fill="#303034"/><rect x="466.7" y="480" width="1" height="3.8" fill="#303034"/><rect x="484.3" y="480" width="1" height="3.8" fill="#303034"/><rect x="501.9" y="480" width="1" height="3.8" fill="#303034"/><rect x="519.5" y="480" width="1" height="3.8" fill="#303034"/><rect x="537.0" y="480" width="1" height="3.8" fill="#303034"/><rect x="554.6" y="480" width="1" height="3.8" fill="#303034"/><rect x="572.2" y="480" width="1" height="3.8" fill="#303034"/><rect x="589.8" y="480" width="1" height="3.8" fill="#303034"/><rect x="607.4" y="480" width="1" height="13.5" fill="#303034"/><rect x="625.0" y="480" width="1" height="3.8" fill="#303034"/><rect x="642.6" y="480" width="1" height="3.8" fill="#303034"/><rect x="660.2" y="480" width="1" height="3.8" fill="#303034"/><rect x="677.8" y="480" width="1" height="3.8" fill="#303034"/><rect x="695.4" y="480" width="1" height="3.8" fill="#303034"/><rect x="712.9" y="480" width="1" height="3.8" fill="#303034"/><rect x="730.5" y="480" width="1" height="3.8" fill="#303034"/><rect x="748.1" y="480" width="1" height="3.8" fill="#303034"/><rect x="765.7" y="480" width="1" height="3.8" fill="#303034"/><rect x="783.3" y="480" width="1" height="13.5" fill="#303034"/><rect x="800.9" y="480" width="1" height="3.8" fill="#303034"/><rect x="818.5" y="480" width="1" height="3.8" fill="#303034"/><rect x="836.1" y="480" width="1" height="3.8" fill="#303034"/><rect x="853.7" y="480" width="1" height="3.8" fill="#303034"/><rect x="871.2" y="480" width="1" height="3.8" fill="#303034"/><rect x="888.8" y="480" width="1" height="3.8" fill="#303034"/><rect x="906.4" y="480" width="1" height="3.8" fill="#303034"/><rect x="924.0" y="480" width="1" height="3.8" fill="#303034"/><rect x="941.6" y="480" width="1" height="3.8" fill="#303034"/><rect x="959.2" y="480" width="1" height="13.5" fill="#303034"/><rect x="976.8" y="480" width="1" height="3.8" fill="#303034"/><rect x="994.4" y="480" width="1" height="3.8" fill="#303034"/><rect x="1012.0" y="480" width="1" height="3.8" fill="#303034"/><rect x="1029.6" y="480" width="1" height="3.8" fill="#303034"/><rect x="1047.2" y="480" width="1" height="3.8" fill="#303034"/><rect x="1064.7" y="480" width="1" height="3.8" fill="#303034"/><rect x="1082.3" y="480" width="1" height="3.8" fill="#303034"/><rect x="1099.9" y="480" width="1" height="3.8" fill="#303034"/><rect x="1117.5" y="480" width="1" height="3.8" fill="#303034"/><rect x="1135.1" y="480" width="1" height="13.5" fill="#303034"/><rect x="1152.7" y="480" width="1" height="3.8" fill="#303034"/><rect x="1170.3" y="480" width="1" height="3.8" fill="#303034"/><rect x="1187.9" y="480" width="1" height="3.8" fill="#303034"/><rect x="1205.5" y="480" width="1" height="3.8" fill="#303034"/><rect x="1223.0" y="480" width="1" height="3.8" fill="#303034"/><rect x="1240.6" y="480" width="1" height="3.8" fill="#303034"/><rect x="1258.2" y="480" width="1" height="3.8" fill="#303034"/><rect x="1275.8" y="480" width="1" height="3.8" fill="#303034"/><rect x="1293.4" y="480" width="1" height="3.8" fill="#303034"/><rect x="1311.0" y="480" width="1" height="13.5" fill="#303034"/></svg>
<div class="t" style="left:435.8px;top:485.3px;font-size:8.5px;color:#74747a">00:00</div>
<div class="t" style="left:611.7px;top:485.3px;font-size:8.5px;color:#74747a">00:03</div>
<div class="t" style="left:787.6px;top:485.3px;font-size:8.5px;color:#74747a">00:06</div>
<div class="t" style="left:963.5px;top:485.3px;font-size:8.5px;color:#74747a">00:09</div>
<div class="t" style="left:1139.4px;top:485.3px;font-size:8.5px;color:#74747a">00:12</div>
<div class="a" style="left:430px;top:549px;width:883px;height:15px;background:#2a2a2e"></div>
<div class="a" style="left:433px;top:569.2px;width:880px;height:15.4px;background:#232326"></div>
<div class="a" style="left:433px;top:585.8px;width:880px;height:42.8px;background:#232326"></div>
<div class="a" style="left:428.8px;top:548.9px;width:183.3px;height:15.2px;background:#9e4a36;border:1.2px solid #21c3d1;border-left-width:4.8px;border-right-width:5.6px;border-radius:1.5px"></div>
<div class="a" style="left:430.7px;top:553px;width:1px;height:7px;background:#138f9b"></div><div class="a" style="left:608.7px;top:553px;width:1px;height:7px;background:#138f9b"></div>
<div class="t" style="left:439.5px;top:553px;font-size:9px;color:#f4e6e0">Online</div>
<div class="a" style="left:433.3px;top:569.4px;width:173.6px;height:15.2px;background:#f08b36;border-radius:1.8px"></div>
<svg class="a" style="left:439.8px;top:572.6px" width="8" height="8" viewBox="14 8 62 62"><g>
<path d="M24 34 l1 3.6 l3.6 1 l-3.6 1 l-1 3.6 l-1 -3.6 l-3.6 -1 l3.6 -1 z" fill="#ffe45c"/>
<path d="M19 33.5 l.6 2 l2 .6 l-2 .6 l-.6 2 l-.6 -2 l-2 -.6 l2 -.6 z M19 41 l.6 2 l2 .6 l-2 .6 l-.6 2 l-.6 -2 l-2 -.6 l2 -.6 z" fill="#ffd94a"/>
<circle cx="39.5" cy="61" r="6.6" fill="#b98f2c"/>
<circle cx="38" cy="60" r="3" fill="#e2c062"/>
<path d="M38 31 C35 40 32.5 46.5 20.5 51.5 C19.8 53 20.8 54.6 23 55.2 L57.5 68 C59.4 68.3 60.2 67 59.6 65 C56.5 56 57.5 46 60 38.5 Z" fill="#d9a722"/>
<path d="M43 32.5 C41 42 38 50 27 54.5 L35 57.5 C43 52 47 42 49 34.5 Z" fill="#ffe25a"/>
<path d="M52 36 C50 46 49 56 51 65.5 L57.5 68 C59.4 68.3 60.2 67 59.6 65 C56.5 56 57.5 46 60 38.5 Z" fill="#b08a22"/>
<path d="M20.5 51.5 C19.8 53 20.8 54.6 23 55.2 L57.5 68 C59.4 68.3 60.2 67 59.6 65 L22.5 51 Z" fill="#f3cf52"/>
<path d="M53 24 C48.5 14 44.5 11 42.5 12.3 C38 17 35.2 25 35 29 C38 32 46 31.5 53 30.5 Z" fill="#ee4149"/>
<path d="M56 24.5 C62 22.5 69 22 71.6 24 C72.6 30 69 38.5 65 41.6 C61 40 57 34.5 55 30.5 Z" fill="#e5333c"/>
<path d="M42.5 12.3 C46 15 50 20 53 24 L53 27 C48 24 42 22 36.5 23 C38 18 40 14.5 42.5 12.3 Z" fill="#f8606a" opacity="0.7"/>
<rect x="49.8" y="23" width="7.4" height="8.4" rx="1.8" fill="#f7525b" transform="rotate(14 53.5 27.2)"/>
</g></svg>
<svg class="a" style="left:0;top:0" width="1440" height="810"><clipPath id="tc1"><rect x="433.7" y="590.2" width="290.9" height="35.2"/></clipPath><g clip-path="url(#tc1)"><svg x="433.7" y="590.2" width="52.7" height="35.2" viewBox="0 0 434 289" preserveAspectRatio="none"><use href="#photo" width="434" height="289"/></svg><svg x="486.4" y="590.2" width="52.7" height="35.2" viewBox="0 0 434 289" preserveAspectRatio="none"><use href="#photo" width="434" height="289"/></svg><svg x="539.1" y="590.2" width="52.7" height="35.2" viewBox="0 0 434 289" preserveAspectRatio="none"><use href="#photo" width="434" height="289"/></svg><svg x="591.8" y="590.2" width="52.7" height="35.2" viewBox="0 0 434 289" preserveAspectRatio="none"><use href="#photo" width="434" height="289"/></svg><svg x="644.5" y="590.2" width="52.7" height="35.2" viewBox="0 0 434 289" preserveAspectRatio="none"><use href="#photo" width="434" height="289"/></svg><svg x="697.2" y="590.2" width="52.7" height="35.2" viewBox="0 0 434 289" preserveAspectRatio="none"><use href="#photo" width="434" height="289"/></svg></g><clipPath id="tc2"><rect x="726.8" y="590.2" width="290.6" height="35.2"/></clipPath><g clip-path="url(#tc2)"><svg x="726.8" y="590.2" width="52.7" height="35.2" viewBox="0 0 434 289" preserveAspectRatio="none"><use href="#photo" width="434" height="289"/></svg><svg x="779.5" y="590.2" width="52.7" height="35.2" viewBox="0 0 434 289" preserveAspectRatio="none"><use href="#photo" width="434" height="289"/></svg><svg x="832.2" y="590.2" width="52.7" height="35.2" viewBox="0 0 434 289" preserveAspectRatio="none"><use href="#photo" width="434" height="289"/></svg><svg x="884.9" y="590.2" width="52.7" height="35.2" viewBox="0 0 434 289" preserveAspectRatio="none"><use href="#photo" width="434" height="289"/></svg><svg x="937.6" y="590.2" width="52.7" height="35.2" viewBox="0 0 434 289" preserveAspectRatio="none"><use href="#photo" width="434" height="289"/></svg><svg x="990.3" y="590.2" width="52.7" height="35.2" viewBox="0 0 434 289" preserveAspectRatio="none"><use href="#photo" width="434" height="289"/></svg></g></svg>
<svg class="a" style="left:409.5px;top:601.5px" width="12" height="11" viewBox="0 0 12 11" fill="none" stroke="#9a9a9e" stroke-width="1.1" stroke-linejoin="round" stroke-linecap="round"><path d="M1.5 4 H3.5 L6.2 1.8 V9.2 L3.5 7 H1.5 Z"/><path d="M8 3.6 Q9.2 5.5 8 7.4 M9.6 2.2 Q11.6 5.5 9.6 8.8"/></svg>
<svg class="a" style="left:0;top:0" width="1440" height="810"><rect x="433.5" y="630.2" width="879" height="14.8" fill="#15386b"/><path d="M969.3 631.2v13.7M972.1 630.5v14.4M974.9 630.6v14.3M977.8 641.0v3.9M980.6 631.5v13.4M983.4 633.4v11.5M986.3 632.9v12.0M989.1 631.8v13.1M991.9 641.9v3.0M994.7 634.6v10.3M997.6 633.2v11.7M1000.4 633.3v11.6M1003.2 633.4v11.5M1006.1 639.5v5.4M1008.9 636.3v8.6M1011.7 630.7v14.2M1014.6 634.5v10.4M1017.4 631.4v13.5M1020.2 634.5v10.4M1023.0 630.4v14.5M1025.9 632.8v12.1M1028.7 633.2v11.7M1031.5 636.7v8.2M1034.4 635.4v9.5M1037.2 640.2v4.7M1040.0 636.1v8.8M1042.9 632.1v12.8M1045.7 635.7v9.2M1048.5 633.6v11.3M1051.3 633.7v11.2M1054.2 630.8v14.1M1057.0 639.8v5.1M1059.8 631.8v13.1M1062.7 642.5v2.4M1065.5 634.5v10.4M1068.3 635.0v9.9M1071.2 630.5v14.4M1074.0 632.6v12.3M1076.8 631.1v13.8M1079.6 635.0v9.9M1082.5 630.8v14.1M1085.3 639.3v5.6M1088.1 641.5v3.4M1091.0 630.6v14.3M1093.8 634.6v10.3M1096.6 632.7v12.2M1099.5 636.4v8.5M1102.3 642.2v2.7M1105.1 630.3v14.6M1107.9 636.7v8.2M1110.8 631.9v13.0M1113.6 633.0v11.9M1116.4 630.9v14.0M1119.3 632.3v12.6M1122.1 639.4v5.5M1124.9 640.9v4.0M1127.8 633.3v11.6M1130.6 630.5v14.4M1133.4 631.0v13.9M1136.2 635.8v9.1M1139.1 634.8v10.1M1141.9 635.7v9.2M1144.7 630.8v14.1M1147.6 632.2v12.7M1150.4 631.2v13.7M1153.2 632.8v12.1M1156.1 633.3v11.6M1158.9 630.3v14.6M1161.7 631.6v13.3M1164.5 632.6v12.3M1167.4 641.7v3.2M1170.2 630.8v14.1M1173.0 631.0v13.9M1175.9 631.4v13.5M1178.7 631.1v13.8M1181.5 631.3v13.6M1184.4 635.7v9.2M1187.2 631.4v13.5M1190.0 634.5v10.4M1192.8 631.8v13.1M1195.7 640.7v4.2M1198.5 635.2v9.7M1201.3 630.9v14.0M1204.2 631.0v13.9M1207.0 631.5v13.4M1209.8 630.9v14.0M1212.7 630.9v14.0M1215.5 631.4v13.5M1218.3 630.5v14.4M1221.1 631.9v13.0M1224.0 634.8v10.1M1226.8 632.1v12.8M1229.6 631.3v13.6M1232.5 633.2v11.7M1235.3 631.8v13.1M1238.1 632.3v12.6M1241.0 631.1v13.8M1243.8 631.3v13.6M1246.6 642.1v2.8M1249.4 631.5v13.4M1252.3 635.2v9.7M1255.1 633.7v11.2M1257.9 633.0v11.9M1260.8 642.2v2.7M1263.6 636.4v8.5M1266.4 636.8v8.1M1269.3 632.5v12.4M1272.1 631.7v13.2M1274.9 634.6v10.3M1277.7 641.2v3.7M1280.6 635.9v9.0M1283.4 634.8v10.1M1286.2 633.7v11.2M1289.1 633.5v11.4M1291.9 632.6v12.3M1294.7 630.4v14.5M1297.5 632.3v12.6M1300.4 631.6v13.3M1303.2 633.3v11.6M1306.0 631.8v13.1M1308.9 630.4v14.5M1311.7 632.6v12.3" stroke="#3f6290" stroke-width="1.5" fill="none"/><path d="M969.3 631.2v3.2M972.1 630.5v3.2M974.9 630.6v3.2M980.6 631.5v3.2M983.4 633.4v1.9M986.3 632.9v2.3M989.1 631.8v3.2M994.7 634.6v0.7M997.6 633.2v2.0M1000.4 633.3v1.9M1003.2 633.4v1.9M1011.7 630.7v3.2M1014.6 634.5v0.8M1017.4 631.4v3.2M1020.2 634.5v0.7M1023.0 630.4v3.2M1025.9 632.8v2.5M1028.7 633.2v2.0M1042.9 632.1v3.1M1048.5 633.6v1.7M1051.3 633.7v1.5M1054.2 630.8v3.2M1059.8 631.8v3.2M1065.5 634.5v0.8M1071.2 630.5v3.2M1074.0 632.6v2.7M1076.8 631.1v3.2M1082.5 630.8v3.2M1091.0 630.6v3.2M1093.8 634.6v0.7M1096.6 632.7v2.6M1105.1 630.3v3.2M1110.8 631.9v3.2M1113.6 633.0v2.3M1116.4 630.9v3.2M1119.3 632.3v2.9M1127.8 633.3v1.9M1130.6 630.5v3.2M1133.4 631.0v3.2M1144.7 630.8v3.2M1147.6 632.2v3.0M1150.4 631.2v3.2M1153.2 632.8v2.5M1156.1 633.3v2.0M1158.9 630.3v3.2M1161.7 631.6v3.2M1164.5 632.6v2.6M1170.2 630.8v3.2M1173.0 631.0v3.2M1175.9 631.4v3.2M1178.7 631.1v3.2M1181.5 631.3v3.2M1187.2 631.4v3.2M1190.0 634.5v0.7M1192.8 631.8v3.2M1201.3 630.9v3.2M1204.2 631.0v3.2M1207.0 631.5v3.2M1209.8 630.9v3.2M1212.7 630.9v3.2M1215.5 631.4v3.2M1218.3 630.5v3.2M1221.1 631.9v3.2M1226.8 632.1v3.1M1229.6 631.3v3.2M1232.5 633.2v2.1M1235.3 631.8v3.2M1238.1 632.3v2.9M1241.0 631.1v3.2M1243.8 631.3v3.2M1249.4 631.5v3.2M1255.1 633.7v1.6M1257.9 633.0v2.3M1269.3 632.5v2.8M1272.1 631.7v3.2M1274.9 634.6v0.6M1286.2 633.7v1.6M1289.1 633.5v1.8M1291.9 632.6v2.6M1294.7 630.4v3.2M1297.5 632.3v2.9M1300.4 631.6v3.2M1303.2 633.3v2.0M1306.0 631.8v3.2M1308.9 630.4v3.2M1311.7 632.6v2.7" stroke="#d39a48" stroke-width="1.5" fill="none"/><path d="M969.3 631.2v1.1M972.1 630.5v1.8M974.9 630.6v1.8M980.6 631.5v0.8M989.1 631.8v0.6M1011.7 630.7v1.6M1017.4 631.4v0.9M1023.0 630.4v1.9M1054.2 630.8v1.5M1059.8 631.8v0.6M1071.2 630.5v1.8M1076.8 631.1v1.3M1082.5 630.8v1.6M1091.0 630.6v1.8M1105.1 630.3v2.0M1110.8 631.9v0.4M1116.4 630.9v1.4M1130.6 630.5v1.9M1133.4 631.0v1.3M1144.7 630.8v1.5M1150.4 631.2v1.1M1158.9 630.3v2.0M1161.7 631.6v0.7M1170.2 630.8v1.6M1173.0 631.0v1.3M1175.9 631.4v1.0M1178.7 631.1v1.2M1181.5 631.3v1.0M1187.2 631.4v1.0M1192.8 631.8v0.6M1201.3 630.9v1.4M1204.2 631.0v1.3M1207.0 631.5v0.8M1209.8 630.9v1.4M1212.7 630.9v1.5M1215.5 631.4v1.0M1218.3 630.5v1.9M1221.1 631.9v0.4M1229.6 631.3v1.1M1235.3 631.8v0.6M1241.0 631.1v1.3M1243.8 631.3v1.1M1249.4 631.5v0.8M1272.1 631.7v0.6M1294.7 630.4v1.9M1300.4 631.6v0.8M1306.0 631.8v0.5M1308.9 630.4v1.9" stroke="#dc5232" stroke-width="1.5" fill="none"/></svg>
<div class="a" style="left:431.4px;top:488px;width:1.3px;height:224px;background:#a2a2a5"></div>
<svg class="a" style="left:428.2px;top:480.6px" width="8" height="13" viewBox="0 0 8 13" fill="#202023" stroke="#fff" stroke-width="1.4" stroke-linejoin="round"><path d="M1 1 H7 V8 L4 11.6 L1 8 Z"/></svg>
<div class="a" style="left:146px;top:100px;width:1148px;height:1px;background:rgba(253,238,190,0.5)"></div>
<div class="a" style="left:1312px;top:120px;width:1px;height:572px;background:rgba(253,238,190,0.5)"></div>
<div class="a" style="left:146px;top:710px;width:1148px;height:1px;background:rgba(253,238,190,0.3)"></div>
</div>
<div class="a" style="left:81.5px;top:606.3px;width:894.7px;height:143.4px;background:#fff;border-radius:4.5px"></div><div class="a" style="left:90.2px;top:659.4px;width:8px;height:37px;background:#d6d6d6"></div><div class="a" style="left:960px;top:659.4px;width:8px;height:37px;background:#d6d6d6"></div><svg class="a" style="left:0;top:0" width="1440" height="810"><defs><clipPath id="fclip"><rect x="106.2" y="614.5" width="845.4" height="131.3" rx="3"/></clipPath></defs><g clip-path="url(#fclip)"><svg x="106.2" y="614.5" width="208.0" height="131.3" viewBox="4.3 14 429.7 272" preserveAspectRatio="none"><use href="#photo" width="434" height="289"/></svg><svg x="314.2" y="614.5" width="221.6" height="131.3" viewBox="0 14 434 260" preserveAspectRatio="none"><use href="#photo" width="434" height="289"/></svg><svg x="535.8" y="614.5" width="204.0" height="131.3" viewBox="13.8 14 408 262.6" preserveAspectRatio="none"><use href="#photo" width="434" height="289"/></svg><svg x="739.8" y="614.5" width="211.8" height="131.3" viewBox="0 14 423.6 262.6" preserveAspectRatio="none"><use href="#photo" width="434" height="289"/></svg></g></svg>
</div>
</body></html>
